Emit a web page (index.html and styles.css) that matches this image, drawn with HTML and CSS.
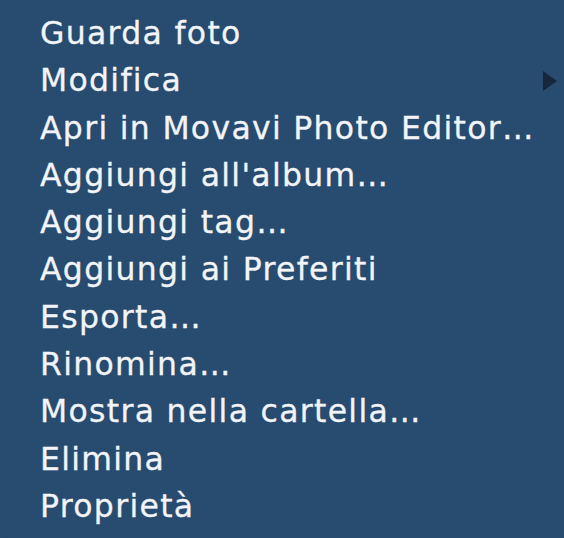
FILE: index.html
```html
<!DOCTYPE html>
<html lang="it">
<head>
    <meta charset="UTF-8">
    <title>Menu</title>
    <link rel="stylesheet" href="styles.css">
</head>
<body>
    <ul class="menu">
        <li class="menu-item">Guarda foto</li>
        <li class="menu-item has-sub">Modifica <span class="arrow"></span></li>
        <li class="menu-item">Apri in Movavi Photo Editor…</li>
        <li class="menu-item">Aggiungi all'album…</li>
        <li class="menu-item">Aggiungi tag…</li>
        <li class="menu-item">Aggiungi ai Preferiti</li>
        <li class="menu-item">Esporta…</li>
        <li class="menu-item">Rinomina…</li>
        <li class="menu-item">Mostra nella cartella…</li>
        <li class="menu-item">Elimina</li>
        <li class="menu-item">Proprietà</li>
    </ul>
</body>
</html>
```

FILE: styles.css
```css
* {
    margin: 0;
    padding: 0;
    box-sizing: border-box;
}

body {
    width: 564px;
    height: 538px;
    background-color: #284b70;
    overflow: hidden;
}

.menu {
    list-style: none;
    height: 538px;
    padding: 10px 0 0 40px;
    background-color: #284b70;
    border-radius: 8px 0 0 8px;
    font-family: "DejaVu Sans", Verdana, sans-serif;
    font-size: 31.5px;
    letter-spacing: 1.3px;
    color: #f2f4f7;
    -webkit-text-stroke: 0.3px #f2f4f7;
}

.menu-item {
    height: 47.3px;
    line-height: 47.3px;
    display: flex;
    align-items: center;
}

.has-sub {
    justify-content: space-between;
}

.arrow {
    width: 0;
    height: 0;
    margin-right: 7px;
    border-top: 10px solid transparent;
    border-bottom: 10px solid transparent;
    border-left: 14px solid #16263b;
}
```
